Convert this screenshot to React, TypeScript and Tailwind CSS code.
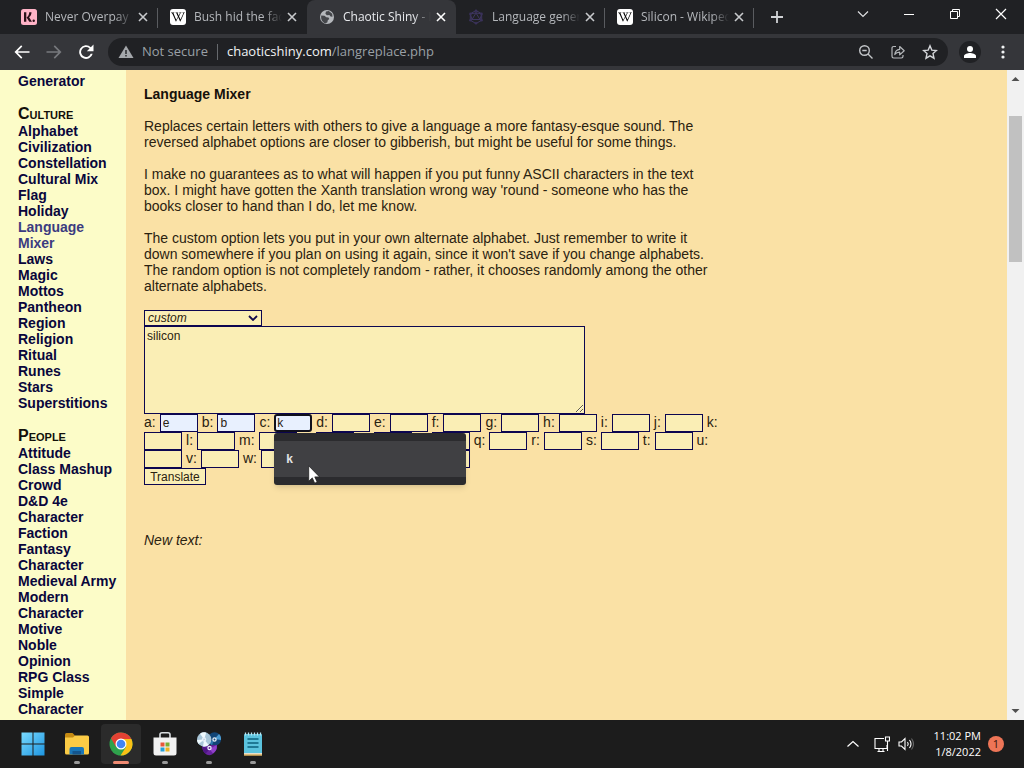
import React from "react";
import { FaWikipediaW } from "react-icons/fa";

const culture = ["Alphabet", "Civilization", "Constellation", "Cultural Mix", "Flag", "Holiday", "Language Mixer", "Laws", "Magic", "Mottos", "Pantheon", "Region", "Religion", "Ritual", "Runes", "Stars", "Superstitions"];
const people = ["Attitude", "Class Mashup", "Crowd", "D&D 4e Character", "Faction", "Fantasy Character", "Medieval Army", "Modern Character", "Motive", "Noble", "Opinion", "RPG Class", "Simple Character"];
const letters = "abcdefghijklmnopqrstuvwxyz".split("");
const filled: Record<string, string> = { a: "e", b: "b", c: "k" };

function WikiIcon() {
  return (
    <span className="flex size-4 items-center justify-center rounded-[3px] bg-white">
      <FaWikipediaW className="size-3.5 text-black" />
    </span>
  );
}

function KlarnaIcon() {
  return (
    <svg viewBox="0 0 16 16" className="size-4">
      <rect width="16" height="16" rx="2.5" fill="#ffb3c7" />
      <path d="M3 3.2h2.3v9.6H3zM8.2 3.2h2.3c0 2.2-.9 3.9-2.4 5l2.9 4.6H8.3L5.6 8.5C7.300 7.300 8.200 5.400 8.200 3.200z" fill="#2a1018" />
      <circle cx="12.700" cy="11.700" r="1.200" fill="#2a1018" />
    </svg>
  );
}

function GlobeIcon() {
  return (
    <svg viewBox="0 0 16 16" className="size-4">
      <circle cx="8" cy="8" r="7" fill="#b5b8bc" />
      <path d="M2.200 6.500l3.300.2 1.800 1.500 2.200.2.800 1.600-1.500 1.200-.5 2.200-2 .9c-2.800-.9-4.600-3.500-4.100-7.800zM7 2.500l2.800-.5 3.400 2.700.3 3-1.900-.2-1.200-1.500-2.500.2-1.500-1.500z" fill="#45474b" />
    </svg>
  );
}

function HexIcon() {
  return (
    <svg viewBox="0 0 16 16" className="size-4" fill="none" stroke="#3e3660" strokeWidth="1">
      <path d="M8 1.500l5.700 3.300v6.500L8 14.500l-5.700-3.200V4.800z" />
      <path d="M8 4l4 6.500H4zM8 1.500V4M2.300 11.300L4 10.500M13.700 11.300L12 10.500M2.300 4.800L4 10.500M13.700 4.800L12 10.500M2.300 4.800L8 4l5.700.8" />
      <g fill="#393159" stroke="none">
        <circle cx="8" cy="1.800" r="1.300" /><circle cx="2.500" cy="4.900" r="1.300" /><circle cx="13.500" cy="4.900" r="1.300" />
        <circle cx="2.500" cy="11.200" r="1.300" /><circle cx="13.500" cy="11.200" r="1.300" /><circle cx="8" cy="14.200" r="1.300" />
      </g>
    </svg>
  );
}

const tabs = [
  { title: "Never Overpay Online", icon: <KlarnaIcon /> },
  { title: "Bush hid the facts", icon: <WikiIcon /> },
  { title: "Chaotic Shiny - Language", icon: <GlobeIcon />, active: true },
  { title: "Language generator", icon: <HexIcon /> },
  { title: "Silicon - Wikipedia", icon: <WikiIcon /> },
];

function TabStrip() {
  return (
    <div className="flex h-[34px] shrink-0 bg-[#202124] pl-[9px]">
      {tabs.map((tab, i) => (
        <div
          key={tab.title}
          className={
            tab.active
              ? "relative flex w-[149px] items-center rounded-t-lg bg-[#35363a] pl-3 pr-[9px] text-[#e8eaed]"
              : "relative flex w-[149px] items-center pl-3 pr-[9px] text-[#b4b7bb]"
          }
        >
          {tab.icon}
          <span className="ml-2 mr-1 min-w-0 flex-1 overflow-hidden whitespace-nowrap text-xs [mask-image:linear-gradient(to_right,black_80%,transparent)]">
            {tab.title}
          </span>
          <button aria-label={"Close " + tab.title} className="flex size-3 items-center justify-center">
            <svg viewBox="0 0 12 12" className="size-3" stroke={tab.active ? "#ffffff" : "#c8cacd"} strokeWidth="1.600">
              <path d="M2 2l8 8M10 2l-8 8" />
            </svg>
          </button>
          {(i === 0 || i >= 3) && <span className="absolute right-0 top-2 h-5 w-px bg-[#5a5c60]" />}
        </div>
      ))}
      <button aria-label="New tab" className="ml-4 flex w-3.5 items-center">
        <svg viewBox="0 0 14 14" className="size-3.5" stroke="#d0d2d5" strokeWidth="1.800"><path d="M7 1v12M1 7h12" /></svg>
      </button>
      <div className="ml-auto flex h-7 items-center">
        <button aria-label="Search tabs" className="flex w-[46px] justify-center">
          <svg viewBox="0 0 12 12" className="size-3" fill="none" stroke="#dedfe1" strokeWidth="1.200"><path d="M1 3.500l5 5 5-5" /></svg>
        </button>
        <button aria-label="Minimize" className="flex w-[46px] justify-center">
          <svg viewBox="0 0 12 12" className="size-3" stroke="#fff" strokeWidth="1"><path d="M1 6.500h10" /></svg>
        </button>
        <button aria-label="Restore" className="flex w-[46px] justify-center">
          <svg viewBox="0 0 12 12" className="size-3" fill="none" stroke="#fff" strokeWidth="1"><path d="M1.500 3.500h7v7h-7zM3.500 3.500v-2h7v7h-2" /></svg>
        </button>
        <button aria-label="Close" className="flex w-[46px] justify-center">
          <svg viewBox="0 0 12 12" className="size-3" stroke="#fff" strokeWidth="1.200"><path d="M1 1l10 10M11 1L1 11" /></svg>
        </button>
      </div>
    </div>
  );
}

function Toolbar() {
  return (
    <div className="flex h-9 shrink-0 items-center bg-[#35363a] pl-3">
      <div className="flex w-24 items-center gap-3">
        <button aria-label="Back">
          <svg viewBox="0 0 24 24" className="size-5" fill="#fff"><path d="M21 11H6.800l5.600-5.600L11 4l-8 8 8 8 1.400-1.400L6.800 13H21z" /></svg>
        </button>
        <button aria-label="Forward">
          <svg viewBox="0 0 24 24" className="size-5" fill="#77797d"><path d="M3 11h14.200l-5.600-5.600L13 4l8 8-8 8-1.400-1.400 5.600-5.600H3z" /></svg>
        </button>
        <button aria-label="Reload">
          <svg viewBox="0 0 24 24" className="size-5" fill="#fff"><path d="M17.800 6.200A8.200 8.200 0 1 0 20 14h-2.300A6 6 0 1 1 16.300 7.700L13 11h8V3z" /></svg>
        </button>
      </div>
      <div className="flex h-7 min-w-0 flex-1 items-center rounded-full bg-[#202124] px-2.5 text-[13px]">
        <svg viewBox="0 0 16 16" className="size-4"><path d="M8 1.500L15.500 14H.5z" fill="#a4a7ab" /><path d="M7.300 6h1.400v4H7.300zM7.300 11h1.400v1.500H7.300z" fill="#202124" /></svg>
        <span className="ml-2 whitespace-nowrap text-[#9aa0a6]">Not secure</span>
        <span className="mx-[9px] h-4 w-px bg-[#66696d]" />
        <span className="whitespace-nowrap text-[#9aa0a6]"><span className="text-[#f1f3f4]">chaoticshiny.com</span>/langreplace.php</span>
        <div className="ml-auto flex items-center gap-4">
          <button aria-label="Zoom">
            <svg viewBox="0 0 16 16" className="size-4" fill="none" stroke="#c3c6c9" strokeWidth="1.400"><circle cx="6.500" cy="6.500" r="4.800" /><path d="M10 10l4.500 4.500M4.300 6.500h4.400" /></svg>
          </button>
          <button aria-label="Share">
            <svg viewBox="0 0 16 16" className="size-4" fill="none" stroke="#b5b8bb" strokeWidth="1.200" strokeLinejoin="round"><path d="M6 2.500H3.700Q2 2.500 2 4.200v8.100Q2 14 3.700 14h7.600Q13 14 13 12.300V11M4.800 10.500c.3-3.200 2-4.900 4.900-5.200V2.500l4.500 4.200-4.500 4.200V8.200c-2.200 0-3.700.6-4.900 2.300z" /></svg>
          </button>
          <button aria-label="Bookmark">
            <svg viewBox="0 0 16 16" className="size-4" fill="none" stroke="#d4d6d9" strokeWidth="1.400"><path d="M8 1.800l1.800 4.300 4.700.4-3.500 3.100 1 4.600-4-2.400-4 2.400 1-4.600L1.500 6.500l4.700-.4z" /></svg>
          </button>
        </div>
      </div>
      <button aria-label="Profile" className="ml-[11px] flex size-[22px] items-center justify-center rounded-full bg-[#202124]">
        <svg viewBox="0 0 14 14" className="size-3.5" fill="#fff"><circle cx="7" cy="4" r="3" /><path d="M1 13v-2c0-2 4-3 6-3s6 1 6 3v2z" /></svg>
      </button>
      <button aria-label="Menu" className="mx-[13px] flex w-[17px] justify-center">
        <svg viewBox="0 0 4 16" className="h-4 w-1" fill="#f1f3f4"><circle cx="2" cy="3" r="1.600" /><circle cx="2" cy="8" r="1.600" /><circle cx="2" cy="13" r="1.600" /></svg>
      </button>
    </div>
  );
}

function NavGroup({ title, items }: { title: string; items: string[] }) {
  return (
    <section className="mt-4">
      <h2 className="text-base leading-[18px] text-[#12100a] [font-variant:small-caps]">{title}</h2>
      <ul>
        {items.map((item) => (
          <li key={item}>
            <a href="#" className={item === "Language Mixer" ? "text-[#3b3b80]" : "text-[#09063c]"}>{item}</a>
          </li>
        ))}
      </ul>
    </section>
  );
}

function LetterFields() {
  return (
    <div className="flex w-[590px] flex-wrap gap-x-1">
      {letters.map((l) => (
        <React.Fragment key={l}>
          <label htmlFor={"letter-" + l} className="h-[18px] leading-4">{l}:</label>
          <span className="relative flex">
            <input
              id={"letter-" + l}
              defaultValue={filled[l] ?? ""}
              className={
                l === "c"
                  ? "h-[18px] w-[38px] rounded-[3px] border-2 border-[#10101c] bg-[#e8f0fe] px-px text-xs outline-none"
                  : filled[l]
                    ? "h-[18px] w-[38px] border border-[#0c0650] bg-[#e8f0fe] px-0.5 text-xs outline-none"
                    : "h-[18px] w-[38px] border border-[#0c0650] bg-[#faeeb5] px-0.5 text-xs outline-none"
              }
            />
            {l === "c" && (
              <div className="absolute left-0 top-[19px] z-10 w-48 rounded-[3px] bg-[#2b2b2e] py-2 shadow-md">
                <div className="h-9 bg-[#404043] pl-3 text-xs font-bold leading-9 text-[#e4e4e6]">k</div>
                <svg viewBox="0 0 12 19" className="absolute left-[34px] top-8 h-[19px] w-3">
                  <path d="M.7.800v15.400l3.600-3.300 2.400 5.300 2.500-1.100-2.400-5.200h4.700z" fill="#fff" stroke="#222" strokeWidth=".8" />
                </svg>
              </div>
            )}
          </span>
        </React.Fragment>
      ))}
    </div>
  );
}

function Page() {
  return (
    <div className="flex min-h-0 flex-1 overflow-hidden bg-[#fae1a5] font-['Liberation_Sans',Arial,sans-serif] text-sm leading-4 text-[#2a2210]">
      <nav className="w-[126px] shrink-0 bg-[#fcfcc8] pl-[18px] pr-2 pt-[3px] font-bold">
        <a href="#" className="block text-[#09063c]">Generator</a>
        <NavGroup title="Culture" items={culture} />
        <NavGroup title="People" items={people} />
      </nav>
      <main className="min-w-0 flex-1 pl-[18px] pt-4">
        <h1 className="font-bold text-[#15100a]">Language Mixer</h1>
        <div className="mt-4 flex max-w-[572px] flex-col gap-4">
          <p>Replaces certain letters with others to give a language a more fantasy-esque sound. The reversed alphabet options are closer to gibberish, but might be useful for some things.</p>
          <p>I make no guarantees as to what will happen if you put funny ASCII characters in the text box. I might have gotten the Xanth translation wrong way 'round - someone who has the books closer to hand than I do, let me know.</p>
          <p>The custom option lets you put in your own alternate alphabet. Just remember to write it down somewhere if you plan on using it again, since it won't save if you change alphabets. The random option is not completely random - rather, it chooses randomly among the other alternate alphabets.</p>
        </div>
        <form className="mt-4" onSubmit={(e) => e.preventDefault()}>
          <div className="relative w-[118px]">
            <select aria-label="Alphabet" className="block h-4 w-full appearance-none border border-[#0c0650] bg-[#faeeb5] pl-[3px] text-xs italic leading-3 outline-none">
              <option>custom</option>
            </select>
            <svg viewBox="0 0 10 6" className="pointer-events-none absolute right-1 top-[5px] h-1.5 w-2.5" fill="none" stroke="#120a4c" strokeWidth="1.800"><path d="M1 1l4 4 4-4" /></svg>
          </div>
          <textarea aria-label="Text" defaultValue="silicon" className="block h-[88px] w-[441px] border border-[#0c0650] bg-[#faeeb5] px-0.5 py-0.5 text-xs leading-[14px] outline-none" />
          <LetterFields />
          <button className="block h-[17px] w-[62px] border border-[#0c0650] bg-[#faeeb5] text-xs leading-3">Translate</button>
        </form>
        <p className="mt-[47px] italic">New text:</p>
      </main>
      <div className="flex w-[17px] shrink-0 flex-col items-center bg-[#f1f1f1]">
        <svg viewBox="0 0 17 17" className="size-[17px]"><path d="M4.500 11h8l-4-4z" fill="#505050" /></svg>
        <div className="mt-[29px] h-[146px] w-[13px] bg-[#c1c1c1]" />
        <svg viewBox="0 0 17 17" className="mt-auto size-[17px]"><path d="M4.500 6h8l-4 4z" fill="#505050" /></svg>
      </div>
    </div>
  );
}

const apps = [
  {
    name: "Start",
    icon: (
      <svg viewBox="0 0 24 24" className="size-6">
        <defs><linearGradient id="win" gradientUnits="userSpaceOnUse" x1="0" y1="0" x2="24" y2="24"><stop stopColor="#7bdcff" /><stop offset="1" stopColor="#1b93e0" /></linearGradient></defs>
        <path d="M.5.5h11v11H.5zM12.500.5h11v11h-11zM.5 12.500h11v11H.5zM12.500 12.500h11v11h-11z" fill="url(#win)" />
      </svg>
    ),
  },
  {
    name: "File Explorer",
    icon: (
      <svg viewBox="0 0 24 24" className="size-6">
        <path d="M0 2.500Q0 1 1.500 1h6L10 3.500v3H0z" fill="#c58a12" />
        <path d="M0 5.500h8l2-2h12.500Q24 3.500 24 5V21q0 1.500-1.500 1.500h-21Q0 22.500 0 21z" fill="#fbcb45" />
        <path d="M4.500 22.500V17q0-2 2-2h10.500q2 0 2 2v5.500z" fill="#1976b8" /><path d="M7.500 19h8.500v3.500H7.500z" fill="#14558d" />
      </svg>
    ),
  },
  {
    name: "Chrome",
    icon: (
      <svg viewBox="0 0 24 24" className="size-6">
        <circle cx="12" cy="12" r="11.500" fill="#2fa24c" />
        <path d="M12 .5A11.500 11.500 0 0 0 2 6.300L7 15l5-3V7h10.400A11.500 11.500 0 0 0 12 .5z" fill="#e34133" />
        <path d="M22.400 7H12l5 8-5.500 8.500A11.500 11.500 0 0 0 22.400 7z" fill="#fbc116" />
        <circle cx="12" cy="12" r="5.500" fill="#fff" /><circle cx="12" cy="12" r="4.300" fill="#4285f4" />
      </svg>
    ),
  },
  {
    name: "Microsoft Store",
    icon: (
      <svg viewBox="0 0 24 24" className="size-6">
        <path d="M7 7V2.500Q7 .8 9 .8h6q2 0 2 1.700V7" fill="none" stroke="#d9dde0" strokeWidth="1.600" />
        <path d="M.5 5.500h23V21q0 2.500-2.500 2.500H3Q.5 23.500.5 21z" fill="#f2f2f2" />
        <path d="M7.500 10.500h4v4h-4z" fill="#e8573a" /><path d="M12.500 10.500h4v4h-4z" fill="#7cae33" /><path d="M7.500 15.500h4v4h-4z" fill="#27a0d8" /><path d="M12.500 15.500h4v4h-4z" fill="#efb320" />
      </svg>
    ),
  },
  {
    name: "Disc Manager",
    icon: (
      <svg viewBox="0 0 24 24" className="size-6">
        <circle cx="17.500" cy="7" r="6.700" fill="#124576" /><path d="M17.500 7l4.500-4.900A6.700 6.700 0 0 1 24 8z" fill="#4c9bd0" /><path d="M17.500 7l-5.500 3.700A6.700 6.700 0 0 0 15 13.200z" fill="#2d77b0" />
        <path d="M5 13.500L19.800 13q1 5.500-4.800 9.500-2.500 1.500-5.500 0Q5 19.500 5 13.500z" fill="#68239f" />
        <path d="M12.500 17l7.200-4q.8 5.500-3.700 8.500z" fill="#9140ca" /><path d="M12.500 17l-7.400-3q0 5 3.500 7.800z" fill="#501785" />
        <circle cx="7.200" cy="7.500" r="7.200" fill="#a9c6d8" /><path d="M7.200 7.500L3 1.700A7.200 7.200 0 0 1 9.200.6zM7.200 7.500l4.500 5.400A7.200 7.200 0 0 1 6 14.500zM7.200 7.500L0 8a7.200 7.200 0 0 0 1.500 4z" fill="#f0fafe" />
        <g fill="none" stroke="#e7eff8" strokeWidth="1.300"><circle cx="7" cy="7.500" r="1.600" /><circle cx="17.500" cy="7.500" r="1.600" /><circle cx="12.500" cy="16" r="1.600" /></g>
      </svg>
    ),
  },
  {
    name: "Notepad",
    icon: (
      <svg viewBox="0 0 24 24" className="size-6">
        <rect x="3" y="2" width="18" height="21" rx="1" fill="#5bc3de" /><path d="M3 21h18v2.500H3z" fill="#e5dfcd" /><path d="M3 22.500h18v1H3z" fill="#d99b2b" />
        <path d="M4.500.5v3M7.500.5v3M10.500.5v3M13.500.5v3M16.500.5v3M19.500.5v3" stroke="#b7e5f2" strokeWidth="1.300" />
        <path d="M6.500 7h11M6.500 11h11M6.500 15h11" stroke="#0c617d" strokeWidth="1.600" />
      </svg>
    ),
  },
];

function Taskbar() {
  return (
    <div className="flex h-12 shrink-0 items-center bg-[#1c1c1c] pl-[13px] pr-5 text-white">
      <div className="flex gap-1">
        {apps.map((app) => (
          <button
            key={app.name}
            aria-label={app.name}
            className={
              app.name === "Chrome"
                ? "relative flex size-10 items-center justify-center rounded bg-[#2b2b2b]"
                : "relative flex size-10 items-center justify-center rounded"
            }
          >
            {app.icon}
            {app.name === "Chrome" && <span className="absolute bottom-0 h-[3px] w-4 rounded-full bg-[#ef8a72]" />}
            {app.name !== "Chrome" && app.name !== "Start" && <span className="absolute bottom-0 h-[3px] w-1.5 rounded-full bg-[#9a9a9a]" />}
          </button>
        ))}
      </div>
      <div className="ml-auto flex items-center">
        <button aria-label="Hidden icons" className="mr-3.5">
          <svg viewBox="0 0 14 14" className="size-3.5" fill="none" stroke="#fff" strokeWidth="1.200"><path d="M1.500 9.500L7 4.500l5.500 5" /></svg>
        </button>
        <button aria-label="Network" className="mr-2">
          <svg viewBox="0 0 16 16" className="size-4" fill="none" stroke="#fff" strokeWidth="1.100"><path d="M10 2.500H1v10h12V9M3.500 15.500h7M5 12.500v3M9 12.500v3M11.500 1h4v4h-4zM13.500 5v10" /></svg>
        </button>
        <button aria-label="Volume" className="mr-5">
          <svg viewBox="0 0 16 16" className="size-4" fill="none" stroke="#fff" strokeWidth="1.100"><path d="M1 6v4h2.500l3.500 3.500v-11L3.500 6zM9.500 6q1.500 2 0 4M11.500 4q3 4 0 8" /><path d="M13.500 2.500q4 5.500 0 11" stroke="#666" /></svg>
        </button>
        <div className="text-right text-[11px] leading-4"><div>11:02 PM</div><div>1/8/2022</div></div>
        <span className="ml-[7px] flex size-4 items-center justify-center rounded-full bg-[#ee7557] text-[11px] leading-4 text-[#35140c]">1</span>
      </div>
    </div>
  );
}

export default function App() {
  return (
    <div className="flex h-screen flex-col overflow-hidden font-['Open_Sans','Noto_Sans',sans-serif]">
      <TabStrip />
      <Toolbar />
      <Page />
      <Taskbar />
    </div>
  );
}
